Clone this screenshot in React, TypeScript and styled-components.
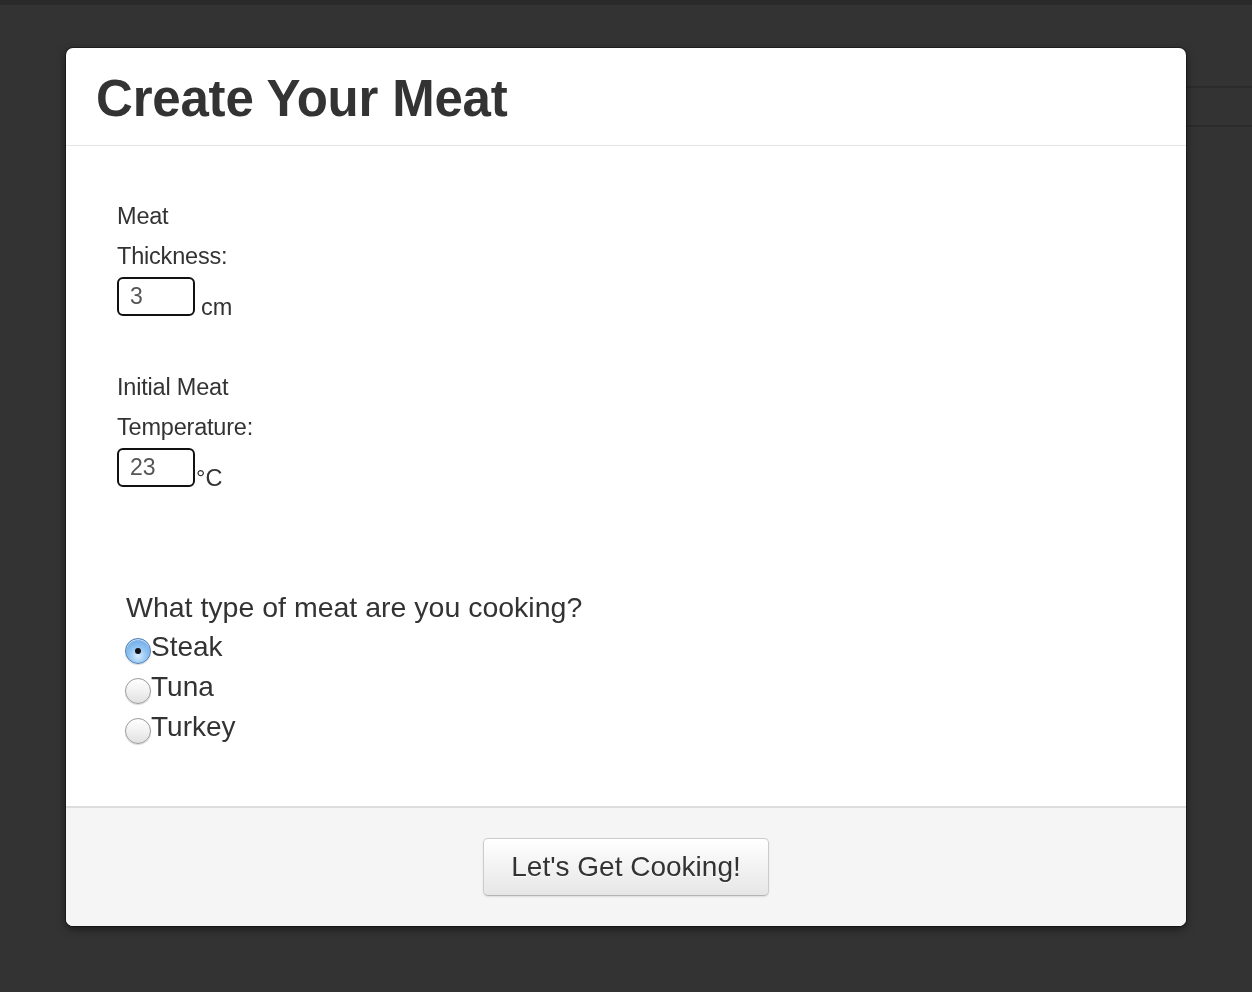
import styled, { createGlobalStyle } from 'styled-components'

const GlobalStyle = createGlobalStyle`
  html, body {
    margin: 0;
    padding: 0;
    background: #333333;
    font-family: 'Liberation Sans', Arial, Helvetica, sans-serif;
    color: #333333;
  }
`

const Page = styled.div`
  min-height: 992px;
  background: #333333;
`

const TopStrip = styled.div`
  height: 5px;
  background: #2a2a2a;
`

const BehindTable = styled.div`
  margin: 81px 0 0 620px;
`

const BehindRow = styled.div`
  height: 37px;
  border-top: 2px solid #2b2b2b;
`

const Modal = styled.div`
  position: fixed;
  top: 48px;
  left: 66px;
  width: 1120px;
  background: #ffffff;
  border-radius: 7px;
  box-shadow: 0 0 0 1px rgba(0, 0, 0, 0.35), 0 3px 9px rgba(0, 0, 0, 0.5);
  overflow: hidden;
`

const Header = styled.div`
  padding: 23px 30px 19px;
  border-bottom: 1px solid #e5e5e5;
`

const Title = styled.h3`
  margin: 0;
  font-size: 51px;
  line-height: 55px;
  font-weight: 700;
  letter-spacing: -0.2px;
  color: #333333;
`

const Body = styled.div`
  height: 660px;
  padding: 50px 51px 0;
  box-sizing: border-box;
`

const FieldGroup = styled.div`
  margin-bottom: 51px;
`

const Label = styled.label`
  display: block;
  width: 150px;
  font-size: 23.5px;
  line-height: 40px;
  color: #333333;
  letter-spacing: -0.2px;
`

const InputRow = styled.div`
  display: flex;
  align-items: flex-end;
  padding-top: 1px;
`

const NumberInput = styled.input`
  width: 78px;
  height: 39px;
  box-sizing: border-box;
  border: 2px solid #111111;
  border-radius: 6px;
  padding: 0 11px 1px;
  font-family: 'Liberation Sans', Arial, sans-serif;
  font-size: 23px;
  color: #555555;
  background: #ffffff;
  outline: none;
`

const Unit = styled.span<{ $gap: number }>`
  margin-left: ${p => p.$gap}px;
  font-size: 23.5px;
  line-height: 23px;
  margin-bottom: -3px;
  color: #333333;
`

const Question = styled.div`
  margin: 100px 0 0 9px;
  font-size: 28.5px;
  line-height: 40px;
  color: #333333;
`

const RadioList = styled.div`
  display: flex;
  flex-direction: column;
  margin-left: 8px;
`

const RadioRow = styled.label`
  display: flex;
  align-items: flex-start;
  height: 40px;
  font-size: 28px;
  line-height: 40px;
  color: #333333;
`

const Radio = styled.span<{ $checked?: boolean }>`
  flex: none;
  width: 26px;
  height: 26px;
  margin-top: 11px;
  border-radius: 50%;
  box-sizing: border-box;
  position: relative;
  border: 1px solid ${p => (p.$checked ? '#4f7fb6' : '#9a9a9a')};
  background: ${p =>
    p.$checked
      ? 'radial-gradient(circle at 50% 70%, #d7ecff 0%, #8ec2f2 45%, #5d9be0 100%)'
      : 'linear-gradient(#ffffff, #f0f0f0 55%, #e0e0e0)'};
  box-shadow: inset 0 1px 1px rgba(255, 255, 255, 0.8), 0 1px 1px rgba(0, 0, 0, 0.15);

  &::after {
    content: '';
    display: ${p => (p.$checked ? 'block' : 'none')};
    position: absolute;
    left: 50%;
    top: 50%;
    width: 6px;
    height: 6px;
    margin: -3px 0 0 -3px;
    border-radius: 50%;
    background: #111111;
  }
`

const Footer = styled.div`
  display: flex;
  justify-content: center;
  padding: 30px 0 30px;
  background: #f5f5f5;
  border-top: 2px solid #dddddd;
`

const Button = styled.button`
  width: 286px;
  height: 58px;
  border: 1px solid #cccccc;
  border-bottom-color: #b3b3b3;
  border-radius: 5px;
  background: linear-gradient(#ffffff, #e6e6e6);
  box-shadow: inset 0 1px 0 rgba(255, 255, 255, 0.2), 0 1px 2px rgba(0, 0, 0, 0.1);
  font-family: 'Liberation Sans', Arial, sans-serif;
  font-size: 28px;
  color: #333333;
  text-shadow: 0 1px 1px rgba(255, 255, 255, 0.75);
  cursor: pointer;
`

const meats = [
  { name: 'Steak', checked: true },
  { name: 'Tuna', checked: false },
  { name: 'Turkey', checked: false },
]

const App = () => {
  return (
    <Page>
      <GlobalStyle />
      <TopStrip />
      <BehindTable>
        <BehindRow />
        <BehindRow />
      </BehindTable>
      <Modal>
        <Header>
          <Title>Create Your Meat</Title>
        </Header>
        <Body>
          <FieldGroup>
            <Label>Meat Thickness:</Label>
            <InputRow>
              <NumberInput type="text" defaultValue="3" />
              <Unit $gap={6}>cm</Unit>
            </InputRow>
          </FieldGroup>
          <FieldGroup>
            <Label>Initial Meat Temperature:</Label>
            <InputRow>
              <NumberInput type="text" defaultValue="23" />
              <Unit $gap={1}>°C</Unit>
            </InputRow>
          </FieldGroup>
          <Question>What type of meat are you cooking?</Question>
          <RadioList>
            {meats.map(meat => (
              <RadioRow key={meat.name}>
                <Radio $checked={meat.checked} />
                {meat.name}
              </RadioRow>
            ))}
          </RadioList>
        </Body>
        <Footer>
          <Button type="button">Let's Get Cooking!</Button>
        </Footer>
      </Modal>
    </Page>
  )
}

export default App
